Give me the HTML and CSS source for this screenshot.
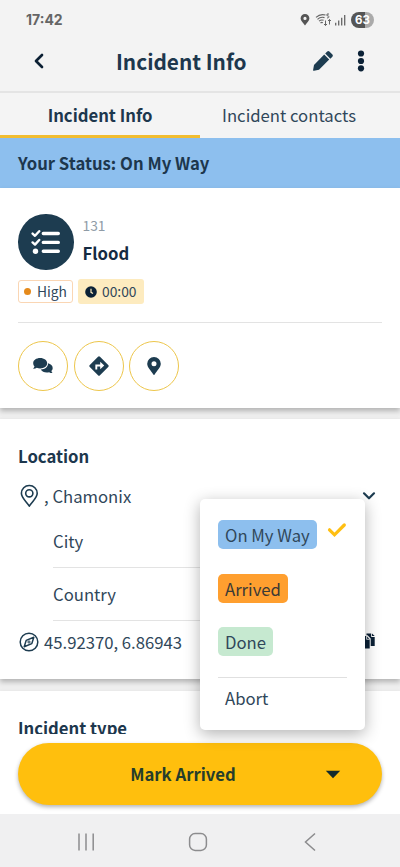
FILE: index.html
```html
<!DOCTYPE html>
<html lang="en">
<head>
<meta charset="utf-8">
<meta name="viewport" content="width=device-width, initial-scale=1">
<title>Incident Info</title>
<link rel="stylesheet" href="styles.css">
</head>
<body>
<div class="app">
  <div class="statusbar">
    <span class="clock">17:42</span>
    <svg class="system-icons" width="46" height="16" viewBox="0 0 46 16">
      <path fill="#555" fill-rule="evenodd" d="M5 2a4.400 4.400 0 0 0-4.400 4.400C.6 9 3.500 11 5 13.500 6.500 11 9.400 9 9.400 6.400A4.400 4.400 0 0 0 5 2zm0 2.800a1.600 1.600 0 1 1 0 3.200 1.600 1.600 0 0 1 0-3.200z"/>
      <g fill="none" stroke="#666" stroke-width="1.100">
        <path d="M16 5.300c3.200-2.900 6.500-3.200 9.500-2.200M17.500 7.300c2-1.900 4.500-2.400 7-1.700M19 9.200c1.500-1.300 3-1.600 4.600-.9M20.500 11c.8-.7 1.500-.8 2.300-.3"/>
        <path stroke-width="1" d="M29 2h-2v1.900c2.600-.6 2.500 2.400 0 2M25.500 8.500v5m-1.500-1.500 1.500 1.500 1.500-1.500M29.500 12.500v-5m-1.500 1.500 1.500-1.500 1.500 1.500"/>
      </g>
      <path stroke="#666" stroke-width="1.300" d="M35.700 13.500v-2.700M38.700 13.500V8.500M41.700 13.500V5.800M44.700 13.500V3"/>
    </svg>
    <span class="battery">63</span>
  </div>

  <header class="header">
    <svg class="back" width="12" height="18" viewBox="0 0 12 18"><path d="M9 3 3 9l6 6" fill="none" stroke="#0b1f33" stroke-width="2.700" stroke-linecap="round" stroke-linejoin="round"/></svg>
    <h1>Incident Info</h1>
    <svg class="edit" width="22" height="22" viewBox="0 0 22 22" fill="#1d3c50"><path d="m12.200 4.600 5 5L7 19.800l-5 1c-.7.1-1-.3-.9-.9l.9-5zM13.200 3.600l2-2c.7-.7 1.500-.7 2.200 0l3 3c.6.700.6 1.400 0 2.100l-2.100 2z"/></svg>
    <svg class="more" width="8" height="22" viewBox="0 0 8 22" fill="#0b2136"><circle cx="4" cy="3.500" r="3.100"/><circle cx="4" cy="11" r="3.100"/><circle cx="4" cy="18.300" r="3.100"/></svg>
  </header>

  <nav class="tabs">
    <a class="tab active">Incident Info</a>
    <a class="tab">Incident contacts</a>
  </nav>

  <main class="content">
    <div class="banner">Your Status: On My Way</div>

    <section class="card summary">
      <div class="incident">
        <div class="avatar">
          <svg width="30" height="26" viewBox="0 0 30 26" fill="none" stroke="#fff">
            <path stroke-width="3.400" stroke-linecap="round" d="M12.300 4.500h15M12.300 13.400h15M12.300 22.200h15"/>
            <path stroke-width="2.400" stroke-linecap="round" stroke-linejoin="round" d="m1.600 4.600 2.400 2.200 4.200-4.600M1.600 13.400l2.400 2.200 4.200-4.600"/>
            <circle cx="4.500" cy="22.200" r="2.700" fill="#fff" stroke="none"/>
          </svg>
        </div>
        <div class="naming">
          <span class="number">131</span>
          <span class="name">Flood</span>
        </div>
      </div>
      <div class="tags">
        <span class="tag priority"><i class="dot"></i>High</span>
        <span class="tag timer">
          <svg width="12" height="12" viewBox="0 0 12 12"><circle cx="6" cy="6" r="5.800" fill="#0b2136"/><path d="M6 2.800V6.300l2 1.300" fill="none" stroke="#fdebbf" stroke-width="1.200"/></svg>
          00:00</span>
      </div>
      <div class="actions">
        <span class="action"><svg width="22" height="18" viewBox="0 0 22 18" fill="#1d3c50">
          <path d="M16 6.300c2.700.6 4.700 2.300 4.700 4.600 0 1.200-.5 2.200-1.300 3 .1.900.7 1.500 1.200 2.200-1.300.1-2.500-.3-3.500-.9-3.500.8-7-.2-8.300-2.700C13 12.500 16.200 10 16 6.300z"/>
          <path d="M8.200 1C4.300 1 1.200 3.200 1.200 6.200c0 1.200.5 2.200 1.300 3.100-.2.900-.7 1.700-1.400 2.400 1.400.1 2.700-.3 3.700-.9 1 .4 2.200.6 3.400.6 3.900 0 7-2.300 7-5.200S12.100 1 8.200 1z"/></svg></span>
        <span class="action"><svg width="20" height="20" viewBox="0 0 20 20"><path d="M9 .8.800 9a1.400 1.400 0 0 0 0 2L9 19.200a1.400 1.400 0 0 0 2 0L19.200 11a1.400 1.400 0 0 0 0-2L11 .8a1.400 1.400 0 0 0-2 0z" fill="#1d3c50"/><path d="M7.300 13.600V9.500h5" fill="none" stroke="#fff" stroke-width="1.900"/><path d="M11.200 5.800 15.200 9.500l-4 3.700z" fill="#fff"/></svg></span>
        <span class="action"><svg width="16" height="20" viewBox="0 0 16 20"><path fill="#1d3c50" fill-rule="evenodd" d="M8 1a6.800 6.800 0 0 0-6.800 6.800C1.200 11.500 5 14.500 7.300 18.600c.3.600 1.100.6 1.400 0C11 14.500 14.800 11.500 14.800 7.800A6.800 6.800 0 0 0 8 1zm0 4.200a2.500 2.500 0 1 1 0 5 2.500 2.500 0 0 1 0-5z"/></svg></span>
      </div>
    </section>

    <section class="card location">
      <h2>Location</h2>
      <div class="row address">
        <svg width="20" height="24" viewBox="0 0 20 24" fill="none" stroke="#1d3c50" stroke-width="1.600"><path stroke-linejoin="round" d="M10.300 1.500a7.800 7.800 0 0 0-7.900 7.800c0 4.800 5 8 7.900 12.900 2.900-4.900 7.900-8.100 7.900-12.900A7.800 7.800 0 0 0 10.300 1.500z"/><circle cx="10.300" cy="9.300" r="3.600"/></svg>
        <span class="value">, Chamonix</span>
        <svg class="chevron" width="14" height="10" viewBox="0 0 14 10"><path d="m2 2.300 5 5 5-5" fill="none" stroke="#1d3c50" stroke-width="2.200" stroke-linecap="round" stroke-linejoin="round"/></svg>
      </div>
      <div class="field city">City</div>
      <div class="field">Country</div>
      <div class="row coords">
        <svg width="20" height="20" viewBox="0 0 20 20" fill="none" stroke="#1d3c50" stroke-width="1.500" stroke-linejoin="round"><circle cx="10" cy="10" r="8.800"/><path d="m14.800 5.200-2 6.400-7.600 3.200 2-6.400z"/><circle cx="10" cy="10" r="1.100" stroke-width="1"/></svg>
        <span class="value">45.92370, 6.86943</span>
        <svg class="copy" width="14" height="16" viewBox="0 0 14 16" fill="#0b2136"><path d="M0 3h5.500l3.200 3.200V15.500H0z"/><path d="M5.500.5h4.700V4h3.500v9H9.700V5.600L6.600 2.200H5.500zM11 .5l2.700 2.600H11z"/><path d="M5.600 3v3.300h3.200" fill="none" stroke="#fff" stroke-width=".8"/></svg>
      </div>
    </section>

    <section class="card type">
      <h2>Incident type</h2>
    </section>
  </main>

  <footer class="footer">
    <button class="primary"><span>Mark Arrived</span>
      <svg class="caret" width="16" height="9" viewBox="0 0 16 9"><path d="M.8.800h14.400L8 8.300z" fill="#132a2c"/></svg>
    </button>
  </footer>

  <div class="navbar">
    <svg width="18" height="20" viewBox="0 0 18 20"><path d="M2 1.500v17M9 1.500v17M16.200 1.500v17" stroke="#8c8c8e" stroke-width="1.500"/></svg>
    <svg class="home" width="20" height="20" viewBox="0 0 20 20"><rect x="1.600" y="1.600" width="16.800" height="16.800" rx="5.500" fill="none" stroke="#8c8c8e" stroke-width="1.500"/></svg>
    <svg width="12" height="20" viewBox="0 0 12 20"><path d="M11 1.500 1.500 10l9.500 8.500" fill="none" stroke="#8c8c8e" stroke-width="1.500"/></svg>
  </div>

  <div class="menu">
    <div class="option"><span class="chip way">On My Way</span>
      <svg width="20" height="16" viewBox="0 0 20 16"><path d="m2.500 7.800 5 5L17.300 3" fill="none" stroke="#ffbf12" stroke-width="3.200" stroke-linecap="round"/></svg>
    </div>
    <div class="option"><span class="chip arrived">Arrived</span></div>
    <div class="option"><span class="chip done">Done</span></div>
    <div class="abort">Abort</div>
  </div>
</div>
</body>
</html>
```
FILE: styles.css
```css
* { box-sizing: border-box; }

body {
  margin: 0;
  font-family: "Noto Sans CJK SC", "Noto Sans", sans-serif;
  font-size: 16.7px;
  color: #30475a;
  background: #fff;
}

svg { display: block; flex: none; }
h1, h2 { margin: 0; font-weight: 700; }

.app {
  position: relative;
  display: flex;
  flex-direction: column;
  width: 400px;
  height: 867px;
  overflow: hidden;
}

.statusbar {
  display: flex;
  align-items: center;
  height: 38px;
  padding: 1px 26px 0;
  background: #f3f3f3;
}
.clock {
  font: 700 14px/20px Inter, sans-serif;
  color: #656565;
  flex: 1;
}
.battery {
  width: 23px;
  height: 16px;
  margin-left: 5px;
  border-radius: 8px;
  background: linear-gradient(90deg, #555 63%, #aaa 63%);
  color: #fff;
  font: 700 11.5px/16px Inter, sans-serif;
  text-align: center;
}

.header {
  display: flex;
  align-items: center;
  height: 55px;
  padding: 0 35px 8px 33px;
  background: #f3f3f3;
  border-bottom: 2px solid #e4e4e4;
}
.header h1 {
  margin-left: 71px;
  flex: 1;
  font-size: 20.8px;
  line-height: 32px;
  color: #1d374d;
}
.more { margin-left: 23px; }

.tabs { display: flex; height: 45px; background: #f4f4f4; }
.tab {
  width: 200px;
  height: 45px;
  line-height: 45px;
  text-align: center;
  white-space: nowrap;
}
.tab.active {
  font-weight: 700;
  color: #1d374d;
  border-bottom: 3px solid #f2bd30;
}
.tab:last-child { padding-right: 22px; }

.content {
  height: 596px;
  overflow: hidden;
  background: #efefef;
}
.banner {
  height: 50px;
  padding-left: 18px;
  line-height: 50px;
  font-weight: 700;
  color: #1d374d;
  background: #8dbfee;
}

.card {
  padding: 0 18px;
  background: #fff;
  box-shadow: 0 3px 5px rgba(0, 0, 0, .25);
}
.card h2 { font-size: 16.7px; line-height: 25px; color: #1d374d; }

.summary { height: 220px; padding-top: 26px; }
.incident { display: flex; gap: 9px; height: 56px; }
.avatar {
  display: grid;
  place-items: center;
  width: 55.5px;
  height: 55.5px;
  border-radius: 50%;
  background: #1d3c50;
}
.naming { display: flex; flex-direction: column; }
.number { font-size: 13.8px; line-height: 23px; color: #8f9ba6; }
.name { line-height: 33px; font-weight: 700; color: #152b42; }

.tags {
  display: flex;
  align-items: center;
  gap: 5px;
  margin-top: 9px;
  padding-bottom: 18px;
  border-bottom: 1px solid #e3e3e3;
}
.tag {
  display: flex;
  align-items: center;
  height: 23px;
  border-radius: 3px;
  font-size: 13.8px;
  line-height: 19px;
  white-space: nowrap;
}
.priority { width: 55px; padding-left: 5px; border: 1px solid #fad6b4; gap: 6px; }
.dot { width: 7px; height: 7px; border-radius: 50%; background: #e58a1c; }
.timer { width: 66px; height: 25px; padding-left: 7px; gap: 5px; background: #fdebbf; }

.actions { display: flex; gap: 5.5px; margin-top: 18px; }
.action {
  display: grid;
  place-items: center;
  width: 50px;
  height: 50px;
  border: 1.5px solid #edc64b;
  border-radius: 50%;
}

.location { height: 260px; margin-top: 11px; padding-top: 25px; }
.row { display: flex; align-items: center; }
.value { flex: 1; white-space: nowrap; }
.address { height: 53px; padding: 0 6px 0 1px; }
.address .value { margin-left: 5px; }
.field {
  height: 53px;
  margin: 0 18px 0 35px;
  line-height: 53px;
  border-bottom: 1px solid #e3e3e3;
}
.city { height: 46px; line-height: 39px; }
.coords { height: 41px; padding: 0 7px 0 1px; }
.coords .value { margin-left: 5px; }
.coords .copy { margin-top: -2px; }

.type { height: 120px; margin-top: 12px; padding-top: 25px; }

.footer { height: 80px; padding: 8.5px 18px; background: #fff; }
.primary {
  display: grid;
  grid-template-columns: 1fr;
  place-items: center;
  position: relative;
  width: 364px;
  height: 62.5px;
  padding: 0 34px 0 0;
  border: 0;
  border-radius: 32px;
  background: #ffbf0d;
  box-shadow: 0 2px 4px rgba(0, 0, 0, .3);
  font: inherit;
  font-weight: 700;
  color: #263d2b;
}
.caret { position: absolute; right: 41px; top: 27px; }

.navbar {
  display: flex;
  align-items: center;
  justify-content: space-between;
  height: 53px;
  padding: 2px 84px 0 77px;
  background: #f0f0f1;
}
.home { margin-right: 4px; }

.menu {
  position: absolute;
  left: 200px;
  top: 499px;
  width: 165px;
  height: 231px;
  padding: 9px 18px;
  border-radius: 5px;
  background: #fff;
  box-shadow: 0 4px 16px rgba(0, 0, 0, .3);
}
.option { display: flex; align-items: center; height: 53.5px; gap: 10px; }
.option svg { margin-top: -10px; }
.chip {
  height: 29px;
  padding: 0 7px;
  border-radius: 5px;
  line-height: 30px;
  white-space: nowrap;
}
.way { background: #8dbfee; }
.arrived { background: #ff9f2f; color: #3b3a36; }
.done { background: #c6e9d0; }
.abort {
  margin-top: 8px;
  padding-left: 7px;
  border-top: 1px solid #e0e0e0;
  line-height: 41px;
}
```
